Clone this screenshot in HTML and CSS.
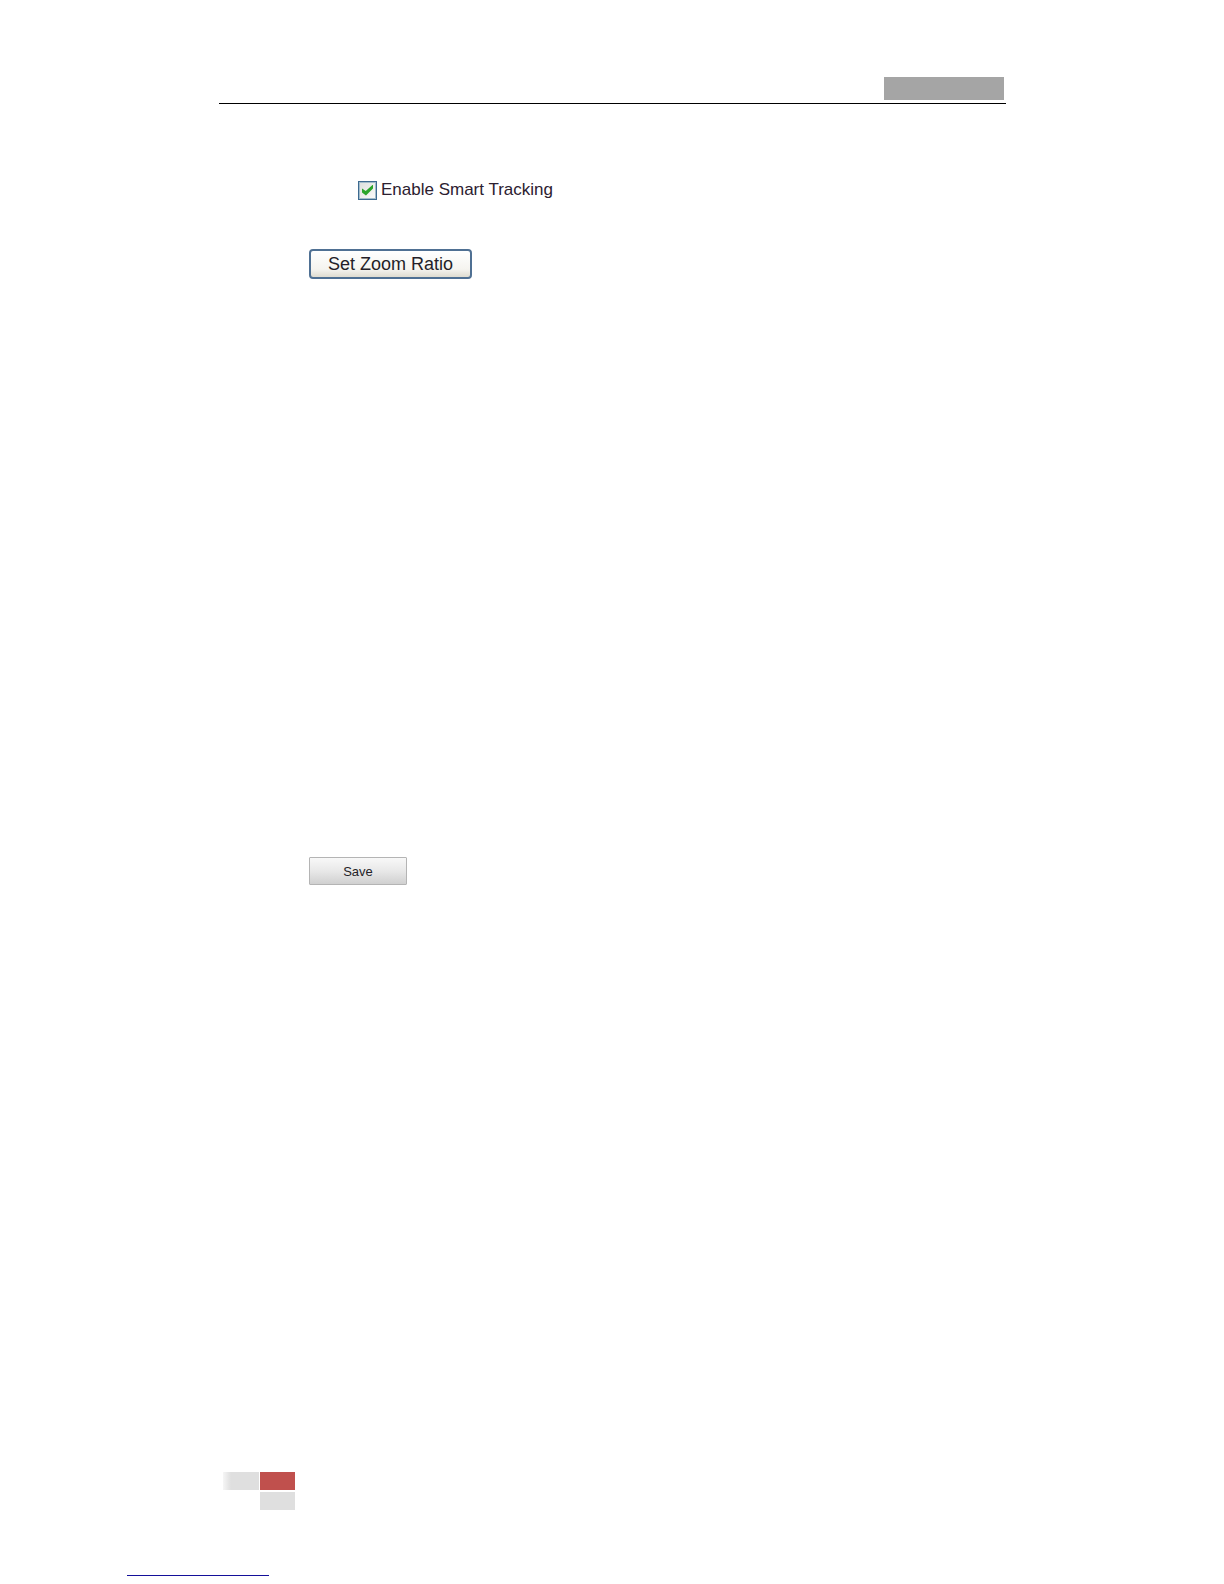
FILE: index.html
```
<!DOCTYPE html>
<html lang="en">
<head>
  <meta charset="UTF-8" />
  <meta name="viewport" content="width=device-width, initial-scale=1" />
  <title>Smart Tracking</title>
  <link rel="stylesheet" href="styles.css">
</head>
<body>
  <header class="page-header">
    <div class="header-tab"></div>
  </header>

  <main class="content">
    <div class="option">
      <input type="checkbox" id="smartTracking" class="option-check" checked>
      <label for="smartTracking">Enable Smart Tracking</label>
    </div>

    <button type="button" class="zoom-button">Set Zoom Ratio</button>
    <button type="button" class="save-button">Save</button>
  </main>

  <footer class="page-footer">
    <div class="blocks">
      <div class="block block-fade"></div>
      <div class="block block-red"></div>
      <div class="block block-grey"></div>
    </div>
    <hr class="footer-rule">
  </footer>
</body>
</html>
```

FILE: styles.css
```
* {
  box-sizing: border-box;
}

body {
  margin: 0;
  min-height: 100vh;
  display: flex;
  flex-direction: column;
  background: #fff;
  color: #2c2030;
  font-family: "Liberation Sans", Arial, sans-serif;
  font-size: 17px;
}

.page-header {
  display: flex;
  justify-content: flex-end;
  margin: 77px 218px 0 219px;
  padding: 0 2px 3px 0;
  border-bottom: 1px solid #000;
}

.header-tab {
  width: 120px;
  height: 23px;
  background: #a5a5a5;
}

.content {
  flex: 1;
  display: flex;
  flex-direction: column;
  align-items: flex-start;
  padding: 76px 218px 0 309px;
}

.option {
  display: flex;
  align-items: center;
  gap: 4px;
  height: 20px;
  margin-left: 49px;
  line-height: 20px;
}

.option-check {
  appearance: none;
  width: 19px;
  height: 19px;
  margin: 0;
  border: 1px solid #3d6a90;
  box-shadow: inset 0 0 0 1px #a3bccb;
  background: linear-gradient(135deg, #dcdfdc, #fbfbfb);
  display: grid;
  place-items: center;
}

/* tick */
.option-check:checked::before {
  content: "";
  width: 11px;
  height: 11px;
  background: #2ba52b;
  clip-path: polygon(0 36%, 34% 60%, 100% 0, 100% 36%, 36% 100%, 0 72%);
}

button {
  padding: 0;
  color: #241e28;
  font-family: inherit;
}

.zoom-button {
  width: 163px;
  height: 30px;
  margin-top: 49px;
  border: 2px solid #4f7093;
  border-radius: 4px;
  background: linear-gradient(#fff, #f5f4ef 70%, #dfdcd0);
  font-size: 18px;
}

.save-button {
  width: 98px;
  height: 28px;
  margin-top: 578px;
  border: 1px solid #b4b4b4;
  border-radius: 1px;
  background: linear-gradient(#f8f8f8, #e8e8e8 50%, #d0d0d0);
  font-size: 13px;
}

.page-footer {
  padding: 0 0 8px 127px;
}

.blocks {
  display: grid;
  grid-template-columns: 36px 35px;
  gap: 2px 1px;
  margin-left: 96px;
}

.block {
  height: 18px;
}

.block-fade {
  background: linear-gradient(to right, #f6f6f6, #dfdfdf 8px);
}

.block-red {
  background: #c0504d;
}

.block-grey {
  grid-column: 2;
  background: #dfdfdf;
}

.footer-rule {
  width: 142px;
  height: 1px;
  margin: 65px 0 0;
  border: 0;
  background: #14109a;
}
```
